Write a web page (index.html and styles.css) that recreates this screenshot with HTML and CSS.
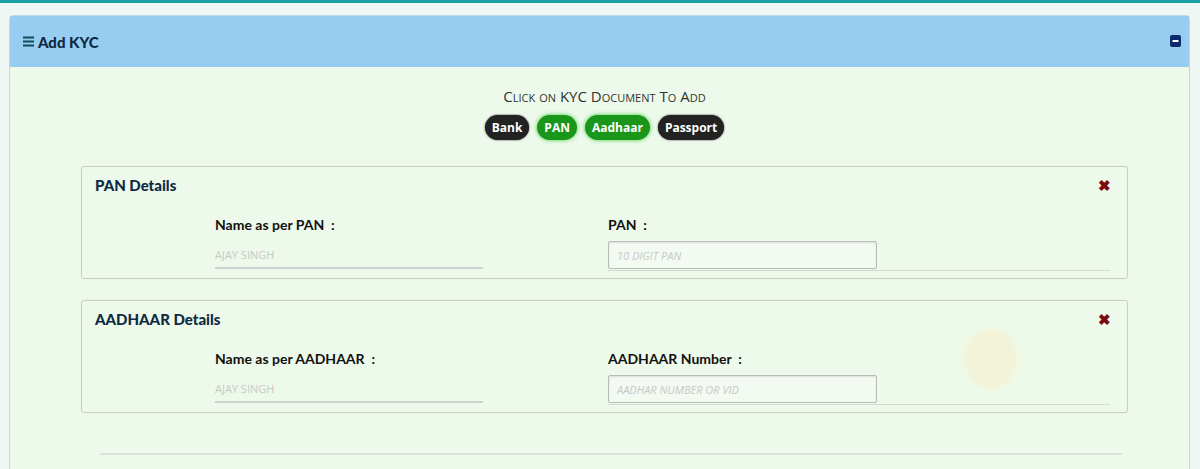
FILE: index.html
```html
<!DOCTYPE html>
<html lang="en">
<head>
    <meta charset="UTF-8">
    <meta name="viewport" content="width=device-width, initial-scale=1.0">
    <title>Add KYC</title>
    <link rel="stylesheet" href="styles.css">
</head>
<body>
    <div class="top-bar"></div>

    <div class="panel">
        <div class="panel-heading">
            <h3>
                <svg class="bars" width="11" height="11" viewBox="0 0 11 11">
                    <rect x="0" y="0.5" width="11" height="2" fill="#0d4d55"/>
                    <rect x="0" y="4.5" width="11" height="2" fill="#0d4d55"/>
                    <rect x="0" y="8.5" width="11" height="2" fill="#0d4d55"/>
                </svg>
                Add KYC
            </h3>
            <svg class="collapse" width="11" height="12" viewBox="0 0 11 12">
                <rect x="0" y="0" width="11" height="12" rx="2" fill="#0b2a6b"/>
                <rect x="2.5" y="5" width="6" height="2" fill="#fff"/>
            </svg>
        </div>

        <div class="panel-body">
            <p class="doc-title">Click on KYC Document To Add</p>
            <div class="doc-buttons">
                <button class="pill">Bank</button>
                <button class="pill active">PAN</button>
                <button class="pill active">Aadhaar</button>
                <button class="pill">Passport</button>
            </div>

            <div class="kyc-box">
                <div class="kyc-head">
                    <h4>PAN Details</h4>
                    <span class="remove">&#10006;</span>
                </div>
                <div class="kyc-row">
                    <div class="field">
                        <label>Name as per PAN &nbsp;:</label>
                        <input type="text" class="line-input" placeholder="AJAY SINGH">
                    </div>
                    <div class="field wide">
                        <label>PAN &nbsp;:</label>
                        <input type="text" class="box-input" placeholder="10 DIGIT PAN">
                    </div>
                </div>
            </div>

            <div class="kyc-box">
                <div class="kyc-head">
                    <h4>AADHAAR Details</h4>
                    <span class="remove">&#10006;</span>
                </div>
                <div class="kyc-row">
                    <div class="field">
                        <label>Name as per AADHAAR &nbsp;:</label>
                        <input type="text" class="line-input" placeholder="AJAY SINGH">
                    </div>
                    <div class="field wide">
                        <label>AADHAAR Number &nbsp;:</label>
                        <input type="text" class="box-input" placeholder="AADHAR NUMBER OR VID">
                    </div>
                </div>
                <div class="glare"></div>
            </div>

            <hr class="divider">
        </div>
    </div>
</body>
</html>
```

FILE: styles.css
```css
body {
    margin: 0;
    background: #eef7f3;
    font-family: "Open Sans", "Liberation Sans", sans-serif;
    color: #222;
    overflow: hidden;
}
.top-bar {
    height: 3px;
    background: #1a9fa6;
}
.panel {
    margin: 12px 10px 0 9px;
    border: 1px solid #b9dced;
    border-radius: 4px 4px 0 0;
    background: #edf9ea;
    height: 460px;
}
.panel-heading {
    height: 51px;
    background: #97cdf0;
    display: flex;
    align-items: center;
    justify-content: space-between;
    padding: 0 8px 0 13px;
}
.panel-heading h3 {
    display: flex;
    align-items: center;
    gap: 4px;
    margin: 0;
    font-family: "Lato", "Open Sans", sans-serif;
    font-size: 15px;
    font-weight: 900;
    color: #0f2a44;
}
.collapse {
    margin-top: -2px;
}
.panel-body {
    padding: 17px 61px 0 71px;
}
.doc-title {
    margin: 0;
    text-align: center;
    font-variant: small-caps;
    font-size: 15px;
    color: #333;
    line-height: 24px;
}
.doc-buttons {
    display: flex;
    justify-content: center;
    gap: 8px;
    margin-top: 7px;
}
.pill {
    font-family: "Open Sans", "Liberation Sans", sans-serif;
    font-size: 12px;
    font-weight: 700;
    color: #fff;
    background: #222;
    border: none;
    border-radius: 13px;
    height: 25px;
    padding: 0 7px;
    box-shadow: 0 0 2px #333;
}
.pill.active {
    background: #1a961a;
    box-shadow: 0 0 4px #3ecb3e;
}
.kyc-box {
    position: relative;
    margin-top: 26px;
    border: 1px solid #c9cfc6;
    border-radius: 3px;
    height: 111px;
    box-shadow: 0 0 1px #ddd;
}
.kyc-box + .kyc-box {
    margin-top: 21px;
}
.kyc-head {
    display: flex;
    justify-content: space-between;
    align-items: center;
    padding: 8px 16px 0 13px;
}
.kyc-head h4 {
    margin: 0;
    font-family: "Lato", "Open Sans", sans-serif;
    font-size: 15px;
    font-weight: 900;
    color: #0f2a44;
}
.remove {
    color: #7a0a10;
    font-size: 15px;
    font-weight: 700;
}
.kyc-row {
    display: grid;
    grid-template-columns: 393px 1fr;
    padding: 21px 17px 0 133px;
}
.field label {
    display: block;
    font-family: "Lato", "Open Sans", sans-serif;
    font-size: 14px;
    font-weight: 700;
    color: #111;
    margin-bottom: 8px;
}
.field input::placeholder {
    color: #c8c8c8;
}
.line-input {
    width: 268px;
    height: 26px;
    border: none;
    border-bottom: 2px solid #cfd3cf;
    background: transparent;
    font-family: "Open Sans", "Liberation Sans", sans-serif;
    font-size: 11px;
    padding: 0;
    margin-top: 0;
}
.wide {
    border-bottom: 1px solid #d4d9d2;
    padding-bottom: 1px;
}
.box-input {
    width: 269px;
    height: 28px;
    box-sizing: border-box;
    border: 1px solid #b8bbb8;
    border-radius: 2px;
    background: #f3faf1;
    font-family: "Open Sans", "Liberation Sans", sans-serif;
    font-style: italic;
    font-size: 11px;
    padding: 0 8px;
    box-shadow: inset 0 1px 2px #ddd;
}
.box-input::placeholder {
    color: #aaa;
}
.glare {
    position: absolute;
    left: 884px;
    top: 30px;
    width: 50px;
    height: 56px;
    border-radius: 50%;
    background: #f2f3d8;
    box-shadow: 0 0 8px #f6f4c8;
}
.divider {
    margin: 40px 6px 0 19px;
    border: none;
    border-top: 2px solid #dde3dc;
}
```
